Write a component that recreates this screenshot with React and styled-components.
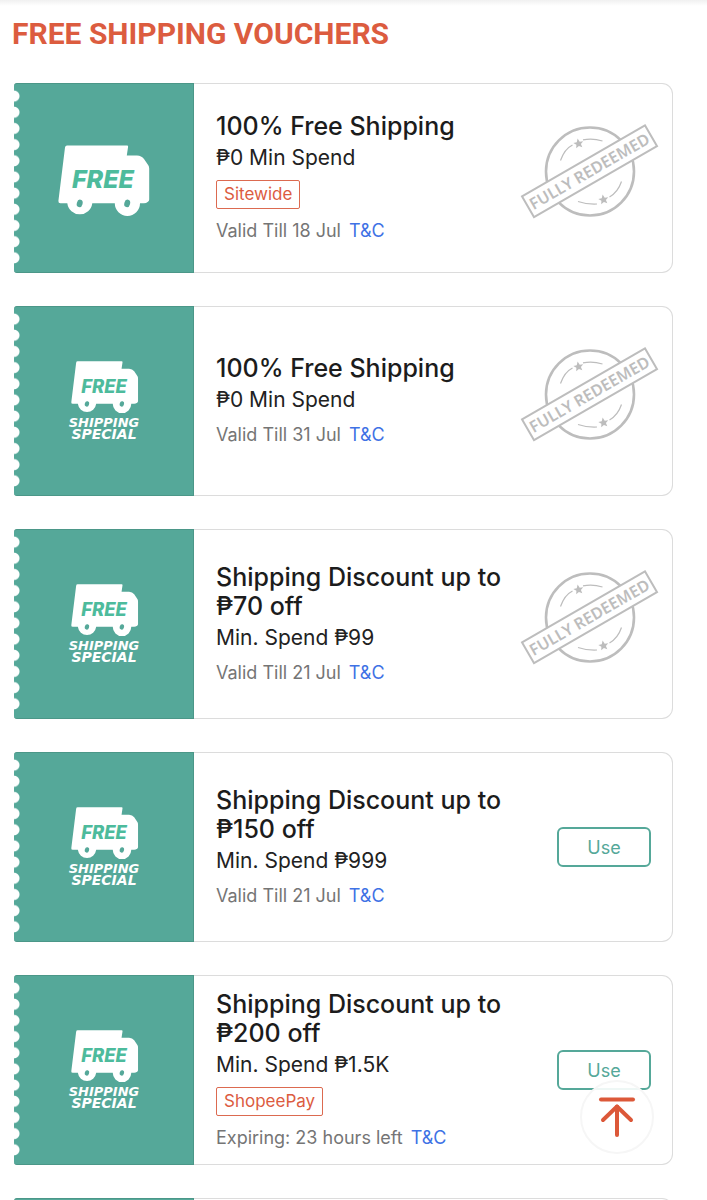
import React from "react";
import styled, { createGlobalStyle } from "styled-components";

const vouchers = [
  {
    id: 1,
    title: "100% Free Shipping",
    spend: "₱0 Min Spend",
    tag: "Sitewide",
    validity: "Valid Till 18 Jul",
    redeemed: true,
  },
  {
    id: 2,
    title: "100% Free Shipping",
    spend: "₱0 Min Spend",
    validity: "Valid Till 31 Jul",
    special: true,
    redeemed: true,
  },
  {
    id: 3,
    title: "Shipping Discount up to ₱70 off",
    spend: "Min. Spend ₱99",
    validity: "Valid Till 21 Jul",
    special: true,
    redeemed: true,
  },
  {
    id: 4,
    title: "Shipping Discount up to ₱150 off",
    spend: "Min. Spend ₱999",
    validity: "Valid Till 21 Jul",
    special: true,
  },
  {
    id: 5,
    title: "Shipping Discount up to ₱200 off",
    spend: "Min. Spend ₱1.5K",
    tag: "ShopeePay",
    validity: "Expiring: 23 hours left",
    special: true,
  },
];

const STAR = "M0 -5 L1.5 -1.6 L5 -1.4 L2.3 0.9 L3.1 4.4 L0 2.5 L-3.1 4.4 L-2.3 0.9 L-5 -1.4 L-1.5 -1.6 Z";

const Truck = () => (
  <g>
    <path
      fill="#fff"
      d="M9 0.5 H69 Q70.3 0.5 70.1 1.8 L68.8 10.5 H79 Q83.5 10.5 86 14 L90.3 20.3 Q91.2 21.6 91.2 23.5 V54.5 Q91.2 56 90 56.8 Q88 58.3 86 58.3 H82 A12.6 12.6 0 0 1 56.8 58.3 H34.3 A12.6 12.6 0 0 1 9.3 58.3 H2.5 Q0.2 58.3 0.4 56 L7 2.4 Q7.3 0.5 9 0.5 Z"
    />
    <ellipse cx="21.7" cy="58.4" rx="2.9" ry="3.8" fill="#55a899" transform="rotate(15 21.7 58.4)" />
    <ellipse cx="69.2" cy="58.4" rx="2.9" ry="3.8" fill="#55a899" transform="rotate(15 69.2 58.4)" />
    <FreeText x="45" y="43" textAnchor="middle">
      FREE
    </FreeText>
  </g>
);

const FreeLogo = () => (
  <svg width="92" height="78" viewBox="0 -6 92 78">
    <Truck />
  </svg>
);

const SpecialLogo = () => (
  <svg width="72" height="80" viewBox="0 0 72 80">
    <g transform="translate(3 0) scale(0.735)">
      <Truck />
    </g>
    <LogoText $size={13} x="36" y="66" textAnchor="middle">
      SHIPPING
    </LogoText>
    <LogoText $size={14} x="36" y="78" textAnchor="middle">
      SPECIAL
    </LogoText>
  </svg>
);

const RedeemedStamp = () => (
  <Stamp width="137" height="95" viewBox="0 0 137 95">
    <circle cx="69" cy="47.5" r="44" fill="none" stroke="#bdbdbd" strokeWidth="2.6" />
    <g fill="none" stroke="#bdbdbd" strokeWidth="1.2">
      <path d="M39.5 36.5 Q43.5 25 51.5 21" />
      <path d="M62 15.8 Q72 14 81.5 17" />
      <path d="M57 77.5 Q66 80.5 76 80" />
      <path d="M88.5 73 Q97 68 100.5 57.5" />
    </g>
    <path d={STAR} fill="#bdbdbd" transform="translate(57.5 19.5) rotate(-10)" />
    <path d={STAR} fill="#bdbdbd" transform="translate(82.5 75.5) rotate(-10)" />
    <g transform="rotate(-30 68.5 47.3)">
      <rect x="-2.5" y="35.3" width="142" height="24" fill="#fff" stroke="#bdbdbd" strokeWidth="2" />
      <StampText x="68.5" y="53" textAnchor="middle">
        FULLY REDEEMED
      </StampText>
    </g>
  </Stamp>
);

const Voucher = ({ title, spend, tag, validity, special, redeemed }) => (
  <Card>
    <Ticket>{special ? <SpecialLogo /> : <FreeLogo />}</Ticket>
    <Details>
      <Title>{title}</Title>
      <Spend>{spend}</Spend>
      {tag ? <Tag>{tag}</Tag> : null}
      <Validity>
        {validity}
        <Terms href="#terms">T&amp;C</Terms>
      </Validity>
    </Details>
    <Action $wide={redeemed}>
      {redeemed ? <RedeemedStamp /> : <UseButton type="button">Use</UseButton>}
    </Action>
  </Card>
);

const App = () => (
  <Page>
    <GlobalStyle />
    <Heading>FREE SHIPPING VOUCHERS</Heading>
    <List>
      {vouchers.map((voucher) => (
        <Voucher key={voucher.id} {...voucher} />
      ))}
      {/* next voucher, still loading */}
      <Card>
        <Ticket />
      </Card>
    </List>
    <TopButton type="button" aria-label="Back to top" onClick={() => window.scrollTo(0, 0)}>
      <svg width="38" height="42" viewBox="0 0 38 42" fill="none" stroke="#dc5839" strokeWidth="4" strokeLinecap="round">
        <path d="M3 3.5 H35" />
        <path d="M19 10.5 V39" />
        <path d="M5 24 L19 10.5 L33 24" strokeLinejoin="round" />
      </svg>
    </TopButton>
  </Page>
);

export default App;

const GlobalStyle = createGlobalStyle`
  body {
    margin: 0;
    background-color: #fff;
    font-family: Inter, "Liberation Sans", sans-serif;
  }
`;

const Page = styled.main`
  box-sizing: border-box;
  padding: 16px 34px 32px 14px;
  background: linear-gradient(#f0f0f0, #fff 6px);
`;

const Heading = styled.h1`
  margin: 0 0 31px -2px;
  font-family: Roboto, "Liberation Sans", sans-serif;
  font-weight: 700;
  font-size: 30px;
  line-height: 36px;
  color: #dc5c3f;
`;

const List = styled.div`
  display: flex;
  flex-direction: column;
  gap: 33px;
`;

const Card = styled.article`
  display: flex;
  min-height: 190px;
  box-sizing: border-box;
  border-radius: 4px 11px 11px 4px;
  box-shadow: inset 0 0 0 1px #dcdcdc;
`;

const Ticket = styled.div`
  position: relative;
  display: flex;
  flex: 0 0 180px;
  box-sizing: border-box;
  justify-content: center;
  align-items: center;
  border: 1px solid #4b9788;
  border-left: none;
  border-radius: 3px 0 0 3px;
  background-color: #55a899;

  /* perforated edge */
  &::before {
    content: "";
    position: absolute;
    top: 4px;
    bottom: 6px;
    left: 0;
    width: 6px;
    background: radial-gradient(circle at 0 50%, #fff 5px, transparent 6px) 0 0 / 6px 16px;
    background-repeat: no-repeat round;
  }
`;

const FreeText = styled.text`
  font-family: Inter, sans-serif;
  font-weight: 800;
  font-style: italic;
  font-size: 25px;
  fill: #4dbb9c;
`;

const LogoText = styled.text`
  font-family: "DejaVu Sans", sans-serif;
  font-weight: 700;
  font-style: italic;
  font-size: ${(props) => props.$size}px;
  fill: #fff;
`;

const Details = styled.div`
  display: flex;
  flex: 1;
  flex-direction: column;
  justify-content: center;
  align-items: flex-start;
  min-width: 0;
  padding: 5px 0 5px 22px;
`;

const Title = styled.h2`
  margin: 0;
  font-weight: 500;
  font-size: 25px;
  line-height: 29px;
  color: #1c1c1c;
`;

const Spend = styled.p`
  margin: 4px 0 0;
  font-size: 21px;
  line-height: 26px;
  color: #222;
`;

const Tag = styled.span`
  box-sizing: border-box;
  margin-top: 9px;
  padding: 0 7px;
  border: 1px solid #dc6a50;
  border-radius: 2px;
  font-size: 17px;
  line-height: 27px;
  color: #dc5c3f;
`;

const Validity = styled.p`
  margin: 9px 0 0;
  font-size: 18px;
  line-height: 26px;
  color: #757575;
`;

const Terms = styled.a`
  margin-left: 8px;
  color: #3f72e5;
  text-decoration: none;
`;

const Action = styled.div`
  display: flex;
  flex: 0 0 152px;
  box-sizing: border-box;
  justify-content: flex-end;
  align-items: center;
  padding-right: ${(props) => (props.$wide ? "15px" : "22px")};
`;

const UseButton = styled.button`
  box-sizing: border-box;
  width: 94px;
  height: 40px;
  padding: 0;
  border: 2px solid #55a899;
  border-radius: 6px;
  background-color: #fff;
  font-family: inherit;
  font-size: 18px;
  color: #55a899;
`;

const Stamp = styled.svg`
  flex: none;
  margin-bottom: 14px;
  overflow: visible;
`;

const StampText = styled.text`
  font-family: "Noto Sans", sans-serif;
  font-weight: 600;
  font-size: 16px;
  fill: #bdbdbd;
`;

const TopButton = styled.button`
  position: fixed;
  right: 53px;
  bottom: 46px;
  display: flex;
  justify-content: center;
  align-items: center;
  width: 74px;
  height: 74px;
  padding: 0;
  border: 2px solid #f6f6f6;
  border-radius: 50%;
  background-color: rgba(255, 255, 255, 0.9);
`;
